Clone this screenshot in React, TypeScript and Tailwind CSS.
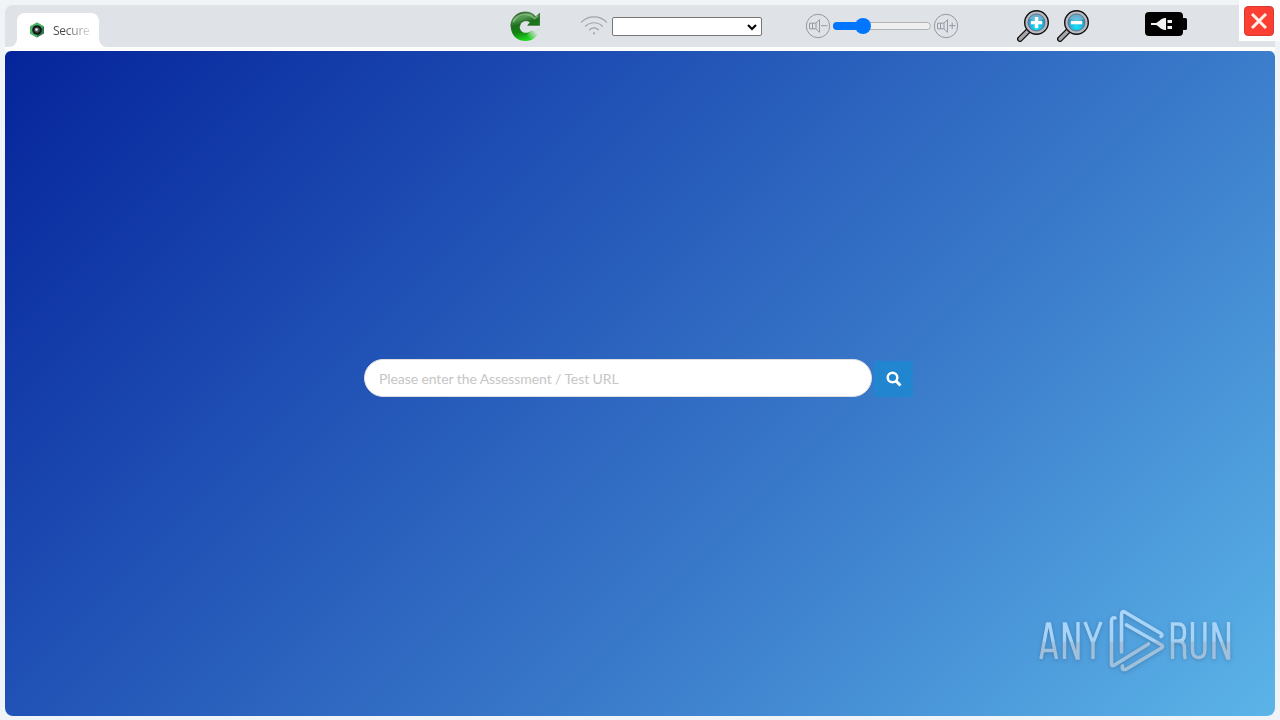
import React from "react";

function Refresh() {
  return (
    <svg className="h-[31px] w-[31px]" viewBox="0 0 31 31">
      <defs>
        <linearGradient id="rg" x1="0.1" y1="0" x2="0.4" y2="1">
          <stop offset="0" stopColor="#235d22" /><stop offset="0.25" stopColor="#5b9d58" />
          <stop offset="0.45" stopColor="#1d6f1d" /><stop offset="0.7" stopColor="#118513" /><stop offset="1" stopColor="#20d81e" />
        </linearGradient>
        <linearGradient id="rf" gradientUnits="userSpaceOnUse" x1="18" y1="27" x2="25" y2="20">
          <stop offset="0" stopColor="#e4e7e8" stopOpacity="0" /><stop offset="1" stopColor="#e4e7e8" stopOpacity=".95" />
        </linearGradient>
      </defs>
      <path d="M29.500 2V14.300H17.500L20 11C15.500 7.800 9.700 11 9.700 15.700C9.700 21.500 17 24 21 19.500L29.500 18.500C28.500 25.500 22.500 30 15.500 30C7 30 .8 24 .8 15.500S7 1 15.500 1C19.500 1 23 2.500 25.500 5.500z" fill="url(#rg)" />
      <path d="M20 11C15.500 7.800 9.700 11 9.700 15.700M29.500 2V14.300H17.500M25.500 5.500C23 2.500 19.500 1 15.500 1C7 1 .8 7 .8 15.500" fill="none" stroke="#174d18" strokeWidth=".6" />
      <path d="M3.500 11C7 2 19 1 24.500 7.700L28 5" fill="none" stroke="#b5d9b1" strokeOpacity=".5" strokeWidth="1.600" />
      <path d="M16 26L20.500 19 30 18C29.500 23 27.500 27 24 29.500z" fill="url(#rf)" />
    </svg>
  );
}

function Wifi() {
  return (
    <svg className="h-5 w-7" viewBox="0 0 28 20" fill="none" stroke="#a0a3ab" strokeWidth="1.2" strokeLinecap="round">
      <path d="M1.500 6.200c7-7 18-7 25 0M5.500 10.200c5-4.600 12-4.600 17 0M9.500 13.800c3-2.600 6-2.600 9 0" />
      <circle cx="14" cy="17.300" r=".5" />
    </svg>
  );
}

function Speaker({ plus }: { plus?: boolean }) {
  return (
    <svg className="h-[26px] w-[26px] shrink-0" viewBox="0 0 26 26" fill="none" stroke="#9699a2" strokeWidth="1">
      <circle cx="13" cy="13" r="11.700" />
      <path d="M4.500 10.200h6.500v5.600h-6.500zM7.500 10v6M11 10l3.500-3.300v12.600l-3.500-3.300M16 12.700h6.500" />
      {plus && <path d="M19.200 9.500v6.500" />}
    </svg>
  );
}

function Magnifier({ plus }: { plus?: boolean }) {
  return (
    <svg className="h-8 w-8" viewBox="0 0 32 32">
      <defs>
        <radialGradient id={plus ? "lensPlus" : "lensMinus"} cx=".5" cy=".75" r=".75">
          <stop offset="0" stopColor="#17e4f5" /><stop offset=".5" stopColor="#25aedb" /><stop offset="1" stopColor="#2f7fa8" />
        </radialGradient>
      </defs>
      <path d="M11 21L3 29" stroke="#111" strokeWidth="6" strokeLinecap="round" />
      <path d="M11.500 20.500L3 29" stroke="#a6a6aa" strokeWidth="3.200" strokeLinecap="round" />
      <circle cx="19.500" cy="12.500" r="11.800" fill="#b9bac2" stroke="#111" strokeWidth="1.400" />
      <circle cx="19.500" cy="12.500" r="8.500" fill={plus ? "url(#lensPlus)" : "url(#lensMinus)"} stroke="#5d6d80" strokeWidth=".9" />
      <path d="M12.500 9a7.700 7.700 0 0 1 14 0q-7 3-14 0" fill="#c5e4f4" fillOpacity=".4" />
      <path d="M13.800 12.600h11.400" stroke="#fff" strokeWidth="3.400" />
      {plus && <path d="M19.500 7v11.200" stroke="#fff" strokeWidth="3.400" />}
    </svg>
  );
}

function Watermark() {
  return (
    <svg className="h-[70px] w-[200px] drop-shadow-[0_1px_2px_rgba(50,80,120,0.4)]" viewBox="1035 605 200 70" fill="none" strokeLinejoin="round" strokeLinecap="round">
      <defs>
        <linearGradient id="wm" gradientUnits="userSpaceOnUse" x1="0" y1="610" x2="0" y2="671">
          <stop offset="0" stopColor="#a9d6fa" /><stop offset=".5" stopColor="#a6d2f5" /><stop offset=".54" stopColor="#a1bfd9" /><stop offset="1" stopColor="#9fc1dc" />
        </linearGradient>
      </defs>
      <g stroke="url(#wm)" strokeWidth="3.400" strokeLinejoin="miter" strokeLinecap="butt">
        <path d="M1041 659l6.500-35h2l7 35M1043.500 650.500h11M1064.500 659v-35h1l11.500 34h1v-36M1085 622l8 21 8-21M1093 642v17" />
        <path d="M1172.500 659v-35h6q6 0 6 8v2q0 7-6 7h-6M1178.500 641q6 0 6 8v5q0 3 1 5M1192.500 622v28q0 7.500 6.200 7.500t6.200-7.500v-28M1214 659v-35h1l12.500 34h1v-36" />
      </g>
      <g stroke="url(#wm)" strokeWidth="3.600">
        <path d="M1121.500 652v-37q0-5 4-2.500l35.500 21q2 2 0 3M1126.500 625l35 20q2 1.500 0 3l-35 21q-5 2-4-3" />
        <path d="M1115 618q-3.500-1-3.500 3v43q0 3 3 1l34-21" />
      </g>
    </svg>
  );
}

export default function App() {
  return (
    <div className="flex h-[720px] w-[1280px] flex-col overflow-hidden bg-[#f1f4f7] px-[5px] pt-[5px] font-['Lato',sans-serif]">
      <header className="flex h-[46px] shrink-0 rounded-tl-lg border-b-4 border-white bg-[#dfe2e6]">
        <div className="flex w-[505px] shrink-0 items-end">
          <div className="h-2 w-3 bg-white"><div className="h-2 w-3 rounded-br-lg bg-[#dfe2e6]" /></div>
          <div className="flex h-[34px] w-[82px] items-center rounded-t-lg bg-white pl-3">
            <svg className="h-4 w-4 shrink-0" viewBox="0 0 16 16">
              <path d="M8 .5l7 4v7l-7 4-7-4v-7z" fill="#2b7a4d" /><path d="M8 .5l7 4L8 8v7.500l-7-4v-7z" fill="#4db76b" />
              <circle cx="8" cy="8" r="4.800" fill="#101715" /><circle cx="8" cy="8" r="2.700" fill="#4b5753" /><circle cx="7.500" cy="7.500" r="1.300" fill="#eee" />
            </svg>
            <span className="ml-2 mt-0.5 bg-linear-to-r from-[#45474a] from-30% to-[#e1e2e4] bg-clip-text font-['Open_Sans',sans-serif] text-[12px] tracking-[-0.25px] text-transparent">Secure</span>
          </div>
          <div className="h-2 w-2 bg-white"><div className="h-2 w-2 rounded-bl-lg bg-[#dfe2e6]" /></div>
        </div>
        <div className="flex h-[42px] items-center">
          <div className="mr-[39px] h-[31px] w-[31px]"><Refresh /></div>
          <Wifi />
          <div className="ml-[4px] mt-[1px] flex h-[19px] w-[150px] items-center justify-end rounded-[2px] border border-[#767676] bg-white pr-1">
            <svg className="h-2 w-[10px]" viewBox="0 0 10 8" fill="none" stroke="#000" strokeWidth="2"><path d="M1 2l4 4 4-4" /></svg>
          </div>
          <div className="ml-[43px] flex items-center"><Speaker />
            <div className="mx-[2px] flex h-4 w-[98px] items-center">
              <div className="relative h-2 w-full rounded-full border border-[#b2b2b2] bg-[#efefef]">
                <div className="absolute -left-px -top-px h-2 w-8 rounded-full bg-[#0075ff]" />
                <div className="absolute -top-[5px] left-[21px] h-4 w-4 rounded-full bg-[#0075ff]" />
              </div>
            </div><Speaker plus />
          </div>
          <div className="ml-[58px] flex gap-2"><Magnifier plus /><Magnifier /></div>
          <svg className="ml-[56px] h-6 w-[43px] -translate-y-0.5" viewBox="0 0 43 24">
            <rect width="38" height="24" rx="4" /><rect x="35" y="6" width="7" height="12" rx="1.500" />
            <path d="M6 11h5c3-1 5-5 9-5h1v12h-1c-4 0-6-4-9-5H6zM22.500 8h4.500v3h-4.500zM22.500 14h4.500v3h-4.500z" fill="#f2f2f3" />
          </svg>
        </div>
        <div className="-mt-[5px] -mr-[5px] ml-auto h-[41px] w-[41px] bg-white pt-[6px] pl-[5px]">
          <div className="flex h-[30px] w-[30px] items-center justify-center rounded border border-[#d53a30] bg-[#fb4033]">
            <svg className="h-4 w-4" viewBox="0 0 16 16" stroke="#fff2eb" strokeWidth="3"><path d="M1 1l14 14M15 1L1 15" /></svg>
          </div>
        </div>
      </header>
      <main className="flex h-[665px] flex-col rounded-t-md rounded-b-lg bg-[linear-gradient(135deg,#05249b_0%,#1f4fb4_32%,#3b7ccb_65%,#5bb4e8_100%)]">
        <div className="mt-[308px] ml-[359px] flex">
          <input className="h-[38px] w-[508px] rounded-full border border-[#dedede] bg-white px-[14px] text-[14px] tracking-[-0.09px] placeholder-[#c6c6c6] outline-none" placeholder="Please enter the Assessment / Test URL" />
          <button className="ml-[2px] mt-[2px] flex h-9 w-[39px] items-center justify-center bg-[#2185d0]">
            <svg className="h-4 w-4" viewBox="0 0 16 16" fill="none" stroke="#fff" strokeWidth="2.500"><circle cx="6.500" cy="6.500" r="4.800" /><path d="M10 10l4.500 4.500" strokeWidth="3" /></svg>
          </button>
        </div>
        <div className="mt-auto mb-[41px] mr-10 self-end"><Watermark /></div>
      </main>
    </div>
  );
}
